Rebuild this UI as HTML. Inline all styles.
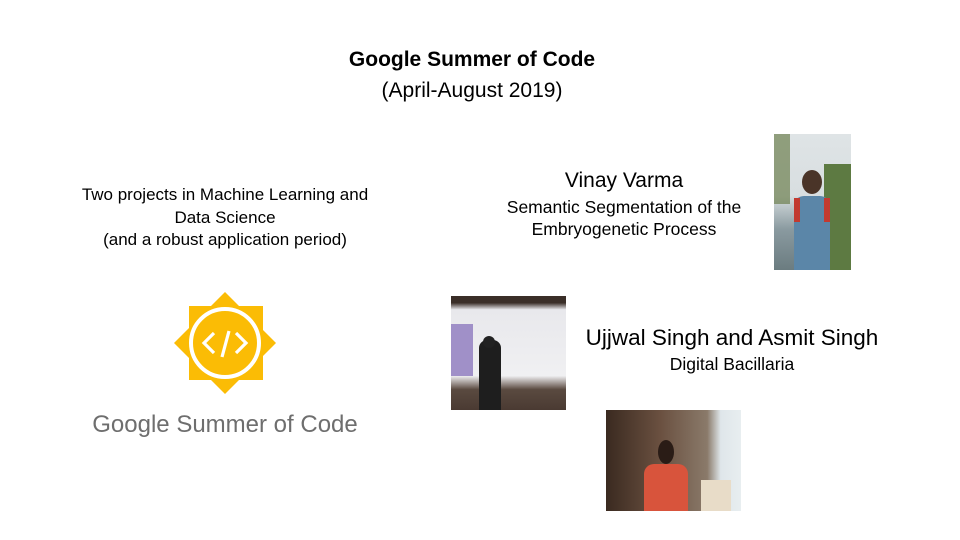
<!DOCTYPE html>
<html><head><meta charset="utf-8"><style>
body{margin:0;width:960px;height:540px;background:#fff;position:relative;overflow:hidden;font-family:"Liberation Sans",sans-serif;color:#000}
.t{position:absolute;white-space:nowrap;text-align:center}
</style></head><body>
<div class="t" style="left:0;width:944px;top:48px;font-size:21px;font-weight:bold">Google Summer of Code</div>
<div class="t" style="left:0;width:944px;top:79px;font-size:21px">(April-August 2019)</div>
<div class="t" style="left:75px;width:300px;top:184px;font-size:17px;line-height:22.5px">Two projects in Machine Learning and<br>Data Science<br>(and a robust application period)</div>
<div class="t" style="left:474px;width:300px;top:169px;font-size:21px">Vinay Varma</div>
<div class="t" style="left:474px;width:300px;top:196px;font-size:17.5px;line-height:22px">Semantic Segmentation of the<br>Embryogenetic Process</div>
<div class="t" style="left:582px;width:300px;top:325px;font-size:22.5px">Ujjwal Singh and Asmit Singh</div>
<div class="t" style="left:582px;width:300px;top:354px;font-size:17.5px">Digital Bacillaria</div>

<svg style="position:absolute;left:0;top:0" width="960" height="540">
<g fill="#fbbc05">
<rect x="189" y="306" width="74" height="74"/>
<polygon points="225,292 276,343 225,394 174,343"/>
</g>
<circle cx="225" cy="343" r="34" fill="none" stroke="#fff" stroke-width="4"/>
<g fill="none" stroke="#fff" stroke-width="3.2">
<polyline points="214,333 204,343 214,353"/>
<polyline points="236,333 246,343 236,353"/>
<line x1="229" y1="331" x2="222" y2="357"/>
</g>
<text x="225" y="432" text-anchor="middle" font-family="Liberation Sans,sans-serif" font-size="24" fill="#6e6e6e">Google Summer of Code</text>
</svg>

<div style="position:absolute;left:774px;top:134px;width:77px;height:136px;background:linear-gradient(180deg,#dfe4e6 0%,#d8dee0 45%,#8a9aa0 70%,#6b7c80 100%);overflow:hidden">
<div style="position:absolute;left:50px;top:30px;width:27px;height:106px;background:#5d7a42"></div>
<div style="position:absolute;left:0;top:0;width:16px;height:70px;background:#6e8050;opacity:.7"></div>
<div style="position:absolute;left:28px;top:36px;width:20px;height:24px;border-radius:50%;background:#4a3428"></div>
<div style="position:absolute;left:20px;top:62px;width:36px;height:74px;background:#5b86a8;border-radius:10px 10px 0 0"></div>
<div style="position:absolute;left:20px;top:64px;width:6px;height:24px;background:#c23a30"></div>
<div style="position:absolute;left:50px;top:64px;width:6px;height:24px;background:#c23a30"></div>
</div>

<div style="position:absolute;left:451px;top:296px;width:115px;height:114px;background:linear-gradient(180deg,#3a2e28 0%,#3a2e28 6%,#e8e8ec 12%,#f0f0f2 70%,#5a4a40 82%,#4a3a32 100%);overflow:hidden">
<div style="position:absolute;left:0;top:28px;width:22px;height:52px;background:#a090c8"></div>
<div style="position:absolute;left:28px;top:44px;width:22px;height:70px;background:#1e1e1e;border-radius:8px 8px 0 0"></div>
<div style="position:absolute;left:32px;top:40px;width:12px;height:12px;border-radius:50%;background:#222"></div>
</div>

<div style="position:absolute;left:606px;top:410px;width:135px;height:101px;background:linear-gradient(90deg,#3a2a20 0%,#6a5040 40%,#8a7a6a 75%,#dfe6ea 85%,#e8eef0 100%);overflow:hidden">
<div style="position:absolute;left:38px;top:54px;width:44px;height:47px;background:#d8543c;border-radius:10px 10px 0 0"></div>
<div style="position:absolute;left:52px;top:30px;width:16px;height:24px;border-radius:50%;background:#2a1c16"></div>
<div style="position:absolute;left:95px;top:70px;width:30px;height:31px;background:#e8dcc8"></div>
</div>
</body></html>
